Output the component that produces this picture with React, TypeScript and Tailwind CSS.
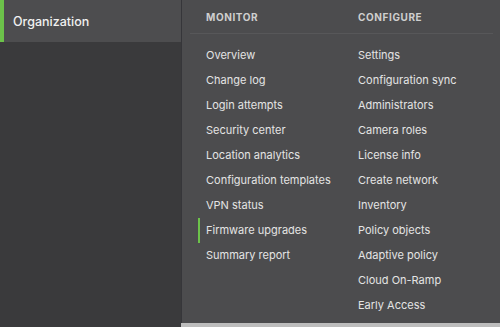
const monitor = [
  "Overview",
  "Change log",
  "Login attempts",
  "Security center",
  "Location analytics",
  "Configuration templates",
  "VPN status",
  "Firmware upgrades",
  "Summary report",
];

const configure = [
  "Settings",
  "Configuration sync",
  "Administrators",
  "Camera roles",
  "License info",
  "Create network",
  "Inventory",
  "Policy objects",
  "Adaptive policy",
  "Cloud On-Ramp",
  "Early Access",
];

const MenuColumn = ({ items, active }: { items: string[]; active?: string }) => (
  <div className="flex flex-col">
    {items.map((item) => (
      <div
        key={item}
        className={`h-[25px] flex items-center pl-[6px] border-l-2 text-[11px] text-[#e4e4e4] ${
          item === active ? "border-[#6cc24a]" : "border-transparent"
        }`}
      >
        {item}
      </div>
    ))}
  </div>
);

export default function App() {
  return (
    <div className="w-[500px] h-[327px] flex bg-[#3a3a3c] overflow-hidden font-['Inter',sans-serif]">
      {/* sidebar */}
      <aside className="w-[181px] flex flex-col">
        <div className="h-[42px] flex items-center bg-[#4d4d4f] border-l-4 border-[#6cc24a] pl-[9px] pt-[2px] text-[12.5px] font-medium text-[#f0f0f0]">
          Organization
        </div>
        <div className="flex-1 bg-[#3a3a3c]" />
      </aside>

      {/* dropdown menu */}
      <div className="flex-1 flex flex-col">
        <div className="flex-1 bg-[#4c4c4e] border-l border-[#36363a] pl-[8px] pr-[7px]">
          <div className="h-[34px] flex items-center border-b border-[#575759] pl-[16px] pt-[2px] text-[10px] font-bold tracking-[0.06em] text-[#cfcfcf]">
            <span className="w-[152px]">MONITOR</span>
            <span>CONFIGURE</span>
          </div>
          <div className="flex pt-[9px] pl-[8px]">
            <div className="w-[152px]">
              <MenuColumn items={monitor} active="Firmware upgrades" />
            </div>
            <MenuColumn items={configure} />
          </div>
        </div>
        <div className="h-[4px] bg-[#bdbdbd]" />
      </div>
    </div>
  );
}
